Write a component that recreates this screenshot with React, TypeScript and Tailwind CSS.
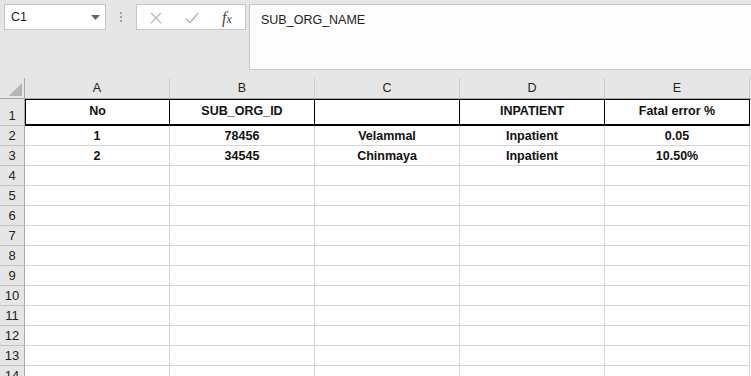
import React from "react";

const cols = ["A", "B", "C", "D", "E"];

const header = ["No", "SUB_ORG_ID", "", "INPATIENT", "Fatal error %"];

const data: string[][] = [
  ["1", "78456", "Velammal", "Inpatient", "0.05"],
  ["2", "34545", "Chinmaya", "Inpatient", "10.50%"],
];

const font = { fontFamily: '"Liberation Sans", Arial, sans-serif' };

function FormulaBar() {
  return (
    <div className="relative h-[78px] bg-[#e6e6e6]">
      {/* Name box */}
      <div className="absolute left-[4px] top-[4px] w-[102px] h-[26px] bg-white border border-[#c6c6c6] flex items-center pl-[6px] text-[12.5px] text-[#222]">
        C1
        <svg className="absolute right-[5px] top-[10px]" width="9" height="5" viewBox="0 0 9 5">
          <path d="M0 0h9L4.5 5z" fill="#666" />
        </svg>
      </div>
      {/* dots */}
      <div className="absolute left-[120px] top-[12px] flex flex-col gap-[2px]">
        <span className="w-[2px] h-[2px] bg-[#a0a0a0]" />
        <span className="w-[2px] h-[2px] bg-[#a0a0a0]" />
        <span className="w-[2px] h-[2px] bg-[#a0a0a0]" />
      </div>
      {/* buttons */}
      <div className="absolute left-[136px] top-[4px] w-[110px] h-[26px] bg-white border border-[#c6c6c6]">
        <svg className="absolute top-[7px] left-[13px]" width="12" height="12" viewBox="0 0 12 12">
          <path d="M1 1l10 10M11 1L1 11" stroke="#b8b8b8" strokeWidth="1.3" />
        </svg>
        <svg className="absolute top-[7px] left-[48px]" width="14" height="12" viewBox="0 0 14 12">
          <path d="M1 6.5l4 4L13 1.5" stroke="#b8b8b8" strokeWidth="1.6" fill="none" />
        </svg>
        <span
          className="absolute top-[1px] left-[85px] text-[16px] italic text-[#444]"
          style={{ fontFamily: '"Liberation Serif", "Times New Roman", serif' }}
        >
          f<span className="text-[12px]">x</span>
        </span>
      </div>
      {/* formula input */}
      <div className="absolute left-[249px] top-[4px] right-[-2px] h-[66px] bg-[#fdfdfd] border border-[#c6c6c6] pl-[11px] pt-[6px] text-[12.5px] text-[#222]">
        SUB_ORG_NAME
      </div>
    </div>
  );
}

function ColumnHeader() {
  return (
    <div className="flex h-[21px] bg-[#e6e6e6] border-b border-[#a9a9a9]">
      <div className="relative w-[25px] shrink-0 border-r border-[#a9a9a9]">
        <svg className="absolute left-[9px] top-[5px]" width="13" height="13" viewBox="0 0 13 13">
          <path d="M13 0v13H0z" fill="#b4b4b4" />
        </svg>
      </div>
      {cols.map((c) => (
        <div
          key={c}
          className="w-[145px] shrink-0 border-r border-[#cdcdcd] flex items-center justify-center text-[12.5px] text-[#222]"
        >
          {c}
        </div>
      ))}
    </div>
  );
}

function RowLabel({ n, className }: { n: number; className: string }) {
  return (
    <div
      className={`w-[25px] shrink-0 bg-[#e6e6e6] border-r border-[#a9a9a9] border-b border-b-[#c4c4c4] flex items-end justify-center text-[13px] leading-[18px] text-[#222] ${className}`}
    >
      {n}
    </div>
  );
}

export default function App() {
  const emptyRows = Array.from({ length: 11 }, (_, i) => i + 4);
  return (
    <div className="w-[751px] h-[376px] overflow-hidden bg-white" style={font}>
      <FormulaBar />
      <ColumnHeader />
      {/* row 1 */}
      <div className="flex h-[27px]">
        <RowLabel n={1} className="h-[27px]" />
        {header.map((h, i) => (
          <div
            key={i}
            className={`w-[145px] shrink-0 h-[27px] border-t border-t-black border-r border-r-black border-b-2 border-b-black ${i === 0 ? "border-l border-l-black w-[144px]" : ""} flex items-end justify-center pb-[3px] text-[12.5px] font-bold text-[#111]`}
          >
            {h}
          </div>
        ))}
      </div>
      {data.map((row, r) => (
        <div key={r} className="flex h-[20px]">
          <RowLabel n={r + 2} className="h-[20px]" />
          {row.map((v, i) => (
            <div
              key={i}
              className="w-[145px] shrink-0 h-[20px] border-r border-b border-[#d4d4d4] flex items-center justify-center pt-[2px] text-[12.5px] font-bold text-[#111]"
            >
              {v}
            </div>
          ))}
        </div>
      ))}
      {emptyRows.map((n) => (
        <div key={n} className="flex h-[20px]">
          <RowLabel n={n} className="h-[20px]" />
          {cols.map((c) => (
            <div key={c} className="w-[145px] shrink-0 h-[20px] border-r border-b border-[#d4d4d4]" />
          ))}
        </div>
      ))}
    </div>
  );
}
